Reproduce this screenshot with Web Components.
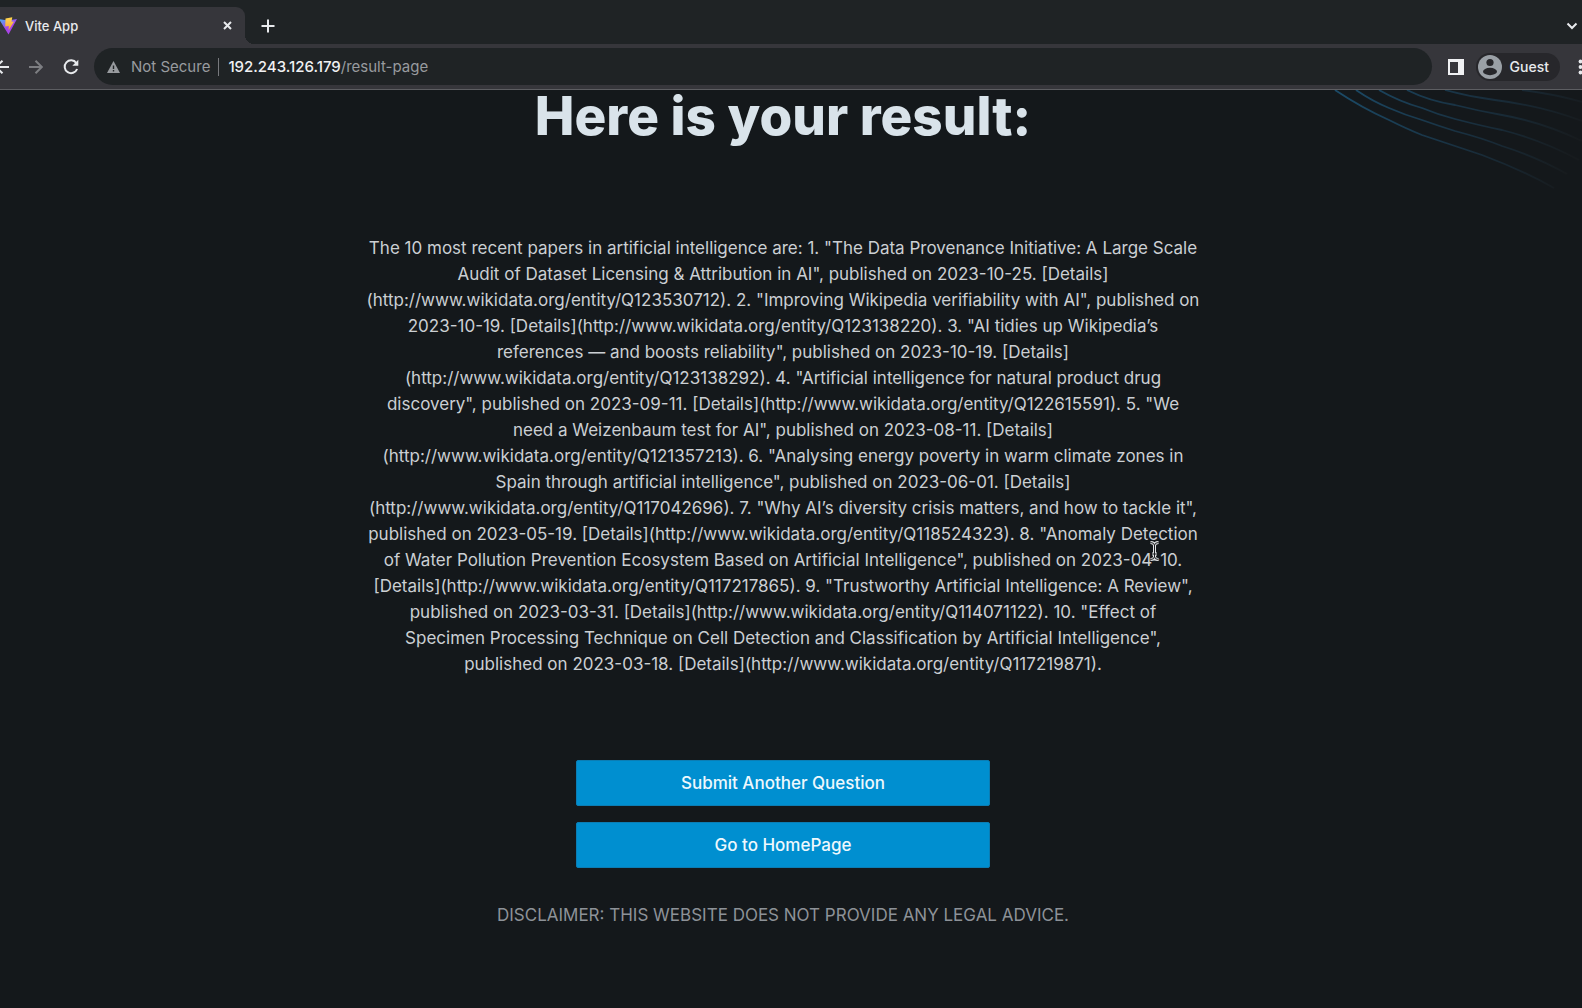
<!DOCTYPE html>
<html lang="en">
<head>
<meta charset="utf-8">
<title>Vite App</title>
<style>
html,body{margin:0;background:#14181b}
body{font-family:Inter,"Noto Sans",sans-serif;overflow:hidden}
</style>
</head>
<body>
<browser-window>
  <tab-strip slot="tabs"><browser-tab>Vite App</browser-tab></tab-strip>
  <browser-toolbar slot="toolbar" host="192.243.126.179" path="/result-page"></browser-toolbar>
  <result-page>
    <span slot="title">Here is your result:</span>
    <result-text slot="answer">The 10 most recent papers in artificial intelligence are: 1. "The Data Provenance Initiative: A Large Scale Audit of Dataset Licensing &amp; Attribution in AI", published on 2023-10-25. [Details](http://www.wikidata.org/entity/Q123530712). 2. "Improving Wikipedia verifiability with AI", published on 2023-10-19. [Details](http://www.wikidata.org/entity/Q123138220). 3. "AI tidies up Wikipedia’s references — and boosts reliability", published on 2023-10-19. [Details](http://www.wikidata.org/entity/Q123138292). 4. "Artificial intelligence for natural product drug discovery", published on 2023-09-11. [Details](http://www.wikidata.org/entity/Q122615591). 5. "We need a Weizenbaum test for AI", published on 2023-08-11. [Details](http://www.wikidata.org/entity/Q121357213). 6. "Analysing energy poverty in warm climate zones in Spain through artificial intelligence", published on 2023-06-01. [Details](http://www.wikidata.org/entity/Q117042696). 7. "Why AI’s diversity crisis matters, and how to tackle it", published on 2023-05-19. [Details](http://www.wikidata.org/entity/Q118524323). 8. "Anomaly Detection of Water Pollution Prevention Ecosystem Based on Artificial Intelligence", published on 2023-04-10. [Details](http://www.wikidata.org/entity/Q117217865). 9. "Trustworthy Artificial Intelligence: A Review", published on 2023-03-31. [Details](http://www.wikidata.org/entity/Q114071122). 10. "Effect of<br>Specimen Processing Technique on Cell Detection and Classification by Artificial Intelligence",<br>published on 2023-03-18. [Details](http://www.wikidata.org/entity/Q117219871).</result-text>
    <action-button slot="actions">Submit Another Question</action-button>
    <action-button slot="actions">Go to HomePage</action-button>
    <span slot="note">DISCLAIMER: THIS WEBSITE DOES NOT PROVIDE ANY LEGAL ADVICE.</span>
  </result-page>
  <text-cursor slot="pointer"></text-cursor>
</browser-window>
<script>
function define(name, html, init) {
  const template = document.createElement('template');
  template.innerHTML = html;
  customElements.define(name, class extends HTMLElement {
    constructor() {
      super();
      this.attachShadow({mode: 'open'}).append(template.content.cloneNode(true));
    }
    connectedCallback() { if (init) init(this, this.shadowRoot); }
  });
}

define('browser-window', `
<style>
:host{display:flex;flex-direction:column;min-height:100vh;position:relative;overflow:hidden;background:#14181b}
</style>
<slot name="tabs"></slot><slot name="toolbar"></slot><slot></slot><slot name="pointer"></slot>`);

define('tab-strip', `
<style>
:host{display:flex;align-items:center;height:44px;background:#1f2325;color:#e8eaed}
button{display:flex;padding:0;border:0;background:none;color:inherit}
.new{margin-left:16px;margin-top:7px}
.search{margin-left:auto;margin-right:4px;margin-top:7px}
svg{display:block;fill:none;stroke:currentColor;stroke-width:2}
slot{display:flex;align-self:flex-end}
</style>
<slot></slot>
<button class="new" aria-label="New tab"><svg width="14" height="14"><path d="M7 0.5V13.5M.5 7H13.5"/></svg></button>
<button class="search" aria-label="Search tabs"><svg width="12" height="8"><path d="M1.5 1.5L6 6L10.500 1.5"/></svg></button>`);

define('browser-tab', `
<style>
:host{display:flex;align-items:center;box-sizing:border-box;width:245px;height:37px;padding-right:13px;border-radius:0 9px 0 0;background:#36363b;font-size:13px;font-weight:500;line-height:18px;position:relative}
:host::after{content:"";position:absolute;left:100%;bottom:0;width:9px;height:9px;background:radial-gradient(circle at 100% 0,transparent 9px,#36363b 9px)}
.label{margin-left:8px;flex:1}
button{display:flex;padding:0;border:0;background:none;color:inherit}
svg{display:block}
</style>
<svg width="17" height="18" viewBox="0 0 17 18">
  <defs>
    <linearGradient id="body" x1="0" y1="0" x2=".7" y2="1"><stop stop-color="#45b5f5"/><stop offset=".6" stop-color="#a844e8"/></linearGradient>
    <linearGradient id="bolt" x1="0" y1="0" x2="0" y2="1"><stop stop-color="#ffd84f"/><stop offset="1" stop-color="#f79a3b"/></linearGradient>
  </defs>
  <path d="M-1 2L8 3.500L17 2L8.500 17.500Z" fill="url(#body)"/>
  <path d="M5.500 1.500L12.300 .3L11.500 4.800L14 4.500L8.500 13.500L8.800 9L5.200 9.500Z" fill="url(#bolt)"/>
</svg>
<span class="label"><slot></slot></span>
<button aria-label="Close tab"><svg width="9" height="9" fill="none" stroke="currentColor" stroke-width="2"><path d="M1 1L8 8M8 1L1 8"/></svg></button>`);

define('browser-toolbar', `
<style>
:host{display:flex;align-items:center;box-sizing:border-box;height:46px;border-bottom:1px solid #5d5e62;background:#36363b;color:#e8eaed;font-size:15px;line-height:20px}
button{display:flex;align-items:center;padding:0;border:0;background:none;color:inherit;font:inherit}
svg{display:block;fill:none;stroke:currentColor;stroke-width:2}
.forward{margin-left:20px;color:#7d7e82}
.reload{margin-left:20px}
.address{display:flex;align-items:center;flex:1;height:37px;margin-left:15px;padding-left:13px;border-radius:19px;background:#1f2325;color:#989b9f}
.state{margin-left:11px}
.address i{width:1px;height:18px;margin:0 9px 0 8px;background:#77797d}
.host{font-weight:500;color:#f0f1f3}
.panel{margin-left:16px}
.profile{height:28px;margin-left:12px;padding:0 11px 0 2px;gap:8px;border-radius:14px;background:#27272b;font-size:14px;font-weight:500}
.profile svg,.panel svg,.menu svg,.warn{stroke:none}
.menu{margin-left:18px}
</style>
<button aria-label="Back"><svg width="9" height="14"><path d="M9 7H-3M2.500 .7L-4 7L2.500 13.300"/></svg></button>
<button class="forward" aria-label="Forward"><svg width="14" height="14"><path d="M0 7H13M6.500 .7L12.800 7L6.500 13.300"/></svg></button>
<button class="reload" aria-label="Reload"><svg width="16" height="16"><path d="M13.300 4A6.400 6.400 0 1 0 14.100 10"/><path d="M15.300 .8V6.700H9.300Z" fill="currentColor" stroke="none"/></svg></button>
<div class="address">
  <svg class="warn" width="13" height="12"><path d="M6.500 0L13 12H0Z" fill="#989b9f"/><path d="M5.800 4.500H7.200V8H5.800ZM5.800 9H7.200V10.400H5.800Z" fill="#1f2325"/></svg>
  <span class="state">Not Secure</span><i></i><span class="host"></span><span class="path"></span>
</div>
<button class="panel" aria-label="Side panel"><svg width="16" height="16"><path fill="#f0f1f3" fill-rule="evenodd" d="M0 0H16V16H0ZM2 3V14H10V3Z"/></svg></button>
<button class="profile"><svg width="24" height="24"><circle cx="12" cy="12" r="12" fill="#9aa0a6"/><circle cx="12" cy="7.500" r="3.600" fill="#27272b"/><ellipse cx="12" cy="16.500" rx="7" ry="3.700" fill="#27272b"/></svg>Guest</button>
<button class="menu" aria-label="Menu"><svg width="4" height="16"><g fill="#e8eaed"><circle cx="2.500" cy="2.500" r="1.900"/><circle cx="2.500" cy="8" r="1.900"/><circle cx="2.500" cy="13.500" r="1.900"/></g></svg></button>`,
(el, root) => {
  root.querySelector('.host').textContent = el.getAttribute('host');
  root.querySelector('.path').textContent = el.getAttribute('path');
});

define('result-page', `
<style>
:host{display:flex;flex-direction:column;align-items:center;flex:1;position:relative;padding-right:16px;text-align:center}
wave-lines{position:absolute;top:0;right:0}
h1{margin:0;font-size:53px;line-height:52px;font-weight:800;color:#d9e3ea}
.answer{max-width:835px;margin-top:93px}
.actions{display:flex;flex-direction:column;gap:16px;width:414px;margin-top:83px}
p{margin:35px 0 0;font-size:17px;line-height:24px;color:#8d9298}
</style>
<wave-lines></wave-lines>
<h1><slot name="title"></slot></h1>
<div class="answer"><slot name="answer"></slot></div>
<div class="actions"><slot name="actions"></slot></div>
<p><slot name="note"></slot></p>`);

define('result-text', `
<style>:host{display:block;font-size:17px;line-height:26px;color:#cbcfd3}</style><slot></slot>`);

define('action-button', `
<style>
:host{display:flex}
button{flex:1;height:46px;padding:0;border:1px solid #0b7db4;border-radius:2px;background:#008fd0;color:#eef8fd;font:500 17px/24px Inter,"Noto Sans",sans-serif}
</style>
<button><slot></slot></button>`);

define('wave-lines', `
<style>:host{display:block}svg{display:block}</style>
<svg width="260" height="110" fill="none" stroke="url(#fade)" stroke-width="1.800">
  <defs><linearGradient id="fade" gradientUnits="userSpaceOnUse" x1="20" y1="0" x2="245" y2="80"><stop stop-color="#1b4a67"/><stop offset=".5" stop-color="#193243"/><stop offset="1" stop-color="#171b1e"/></linearGradient></defs>
  <path d="M13 0Q40 18 67 30Q85 39 100 45Q130 55 160 65Q200 80 232 98"/>
  <path d="M34 0Q50 11 67 18Q83 25 100 30Q117 36 133 41Q160 48 180 56Q215 67 245 84"/>
  <path d="M57 0Q78 12 100 18Q117 25 133 29Q160 36 180 40Q220 50 257 70"/>
  <path d="M85 0Q107 11 133 15Q157 21 180 25Q220 32 260 51"/>
  <path d="M123 0Q148 7 173 10Q220 16 260 31"/>
  <path d="M200 0Q233 4 260 12"/>
</svg>`);

define('text-cursor', `
<style>:host{position:absolute;left:1149px;top:541px}svg{display:block}</style>
<svg width="11" height="20" fill="none"><path d="M1.500 1.500Q5.500 1.500 5.500 4.500Q5.500 1.500 9.500 1.500M5.500 4V16M3 13H8M1.500 18.500Q5.500 18.500 5.500 15.500Q5.500 18.500 9.500 18.500" stroke="#e3e5e7" stroke-width="3"/><path d="M1.500 1.500Q5.500 1.500 5.500 4.500Q5.500 1.500 9.500 1.500M5.500 4V16M3 13H8M1.500 18.500Q5.500 18.500 5.500 15.500Q5.500 18.500 9.500 18.500" stroke="#191b1d"/></svg>`);
</script>
</body>
</html>
